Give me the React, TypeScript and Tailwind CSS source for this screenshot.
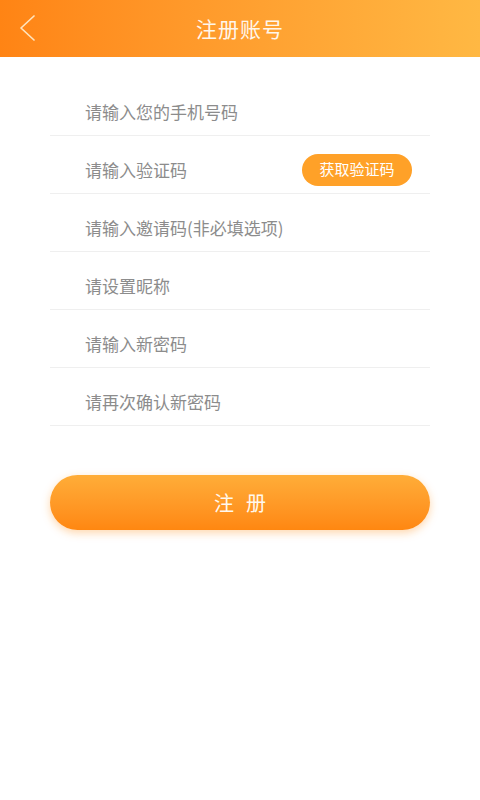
const fields = [
  "请输入您的手机号码",
  "请输入验证码",
  "请输入邀请码(非必填选项)",
  "请设置昵称",
  "请输入新密码",
  "请再次确认新密码",
];

const App = () => {
  return (
    <div
      className="min-h-screen w-[480px] bg-white flex flex-col"
      style={{ fontFamily: '"Noto Sans CJK SC", "Noto Sans", sans-serif' }}
    >
      <header className="h-[57px] bg-gradient-to-r from-[#ff8414] to-[#ffb843] flex items-center relative">
        <button className="absolute left-[18px] top-[14px]">
          <svg width="18" height="28" viewBox="0 0 18 28" fill="none">
            <polyline
              points="16,2 3,14 16,26"
              stroke="#ffe4bd"
              strokeWidth="1.7"
              strokeLinecap="round"
              strokeLinejoin="round"
            />
          </svg>
        </button>
        <h1 className="flex-1 text-center text-[21px] text-[#fff6ea] tracking-[1px]">注册账号</h1>
      </header>

      <main className="pt-[21px] px-[50px]">
        {fields.map((label, i) => (
          <div
            key={label}
            className="h-[58px] pt-[10px] flex items-center justify-between border-b border-[#efefef]"
          >
            <span className="pl-[35px] text-[17px] text-[#8c8c8c]">{label}</span>
            {i === 1 && (
              <button className="h-[32px] w-[110px] mr-[18px] rounded-full bg-[#ffa128] text-white text-[15px]">
                获取验证码
              </button>
            )}
          </div>
        ))}

        <button className="mt-[49px] w-full h-[55px] rounded-full bg-gradient-to-b from-[#ffad38] to-[#ff8710] text-[#fff8ee] text-[20px] tracking-[12px] pl-[12px] shadow-[0_3px_8px_rgba(255,140,20,0.35)]">
          注册
        </button>
      </main>
    </div>
  );
};

export default App;
